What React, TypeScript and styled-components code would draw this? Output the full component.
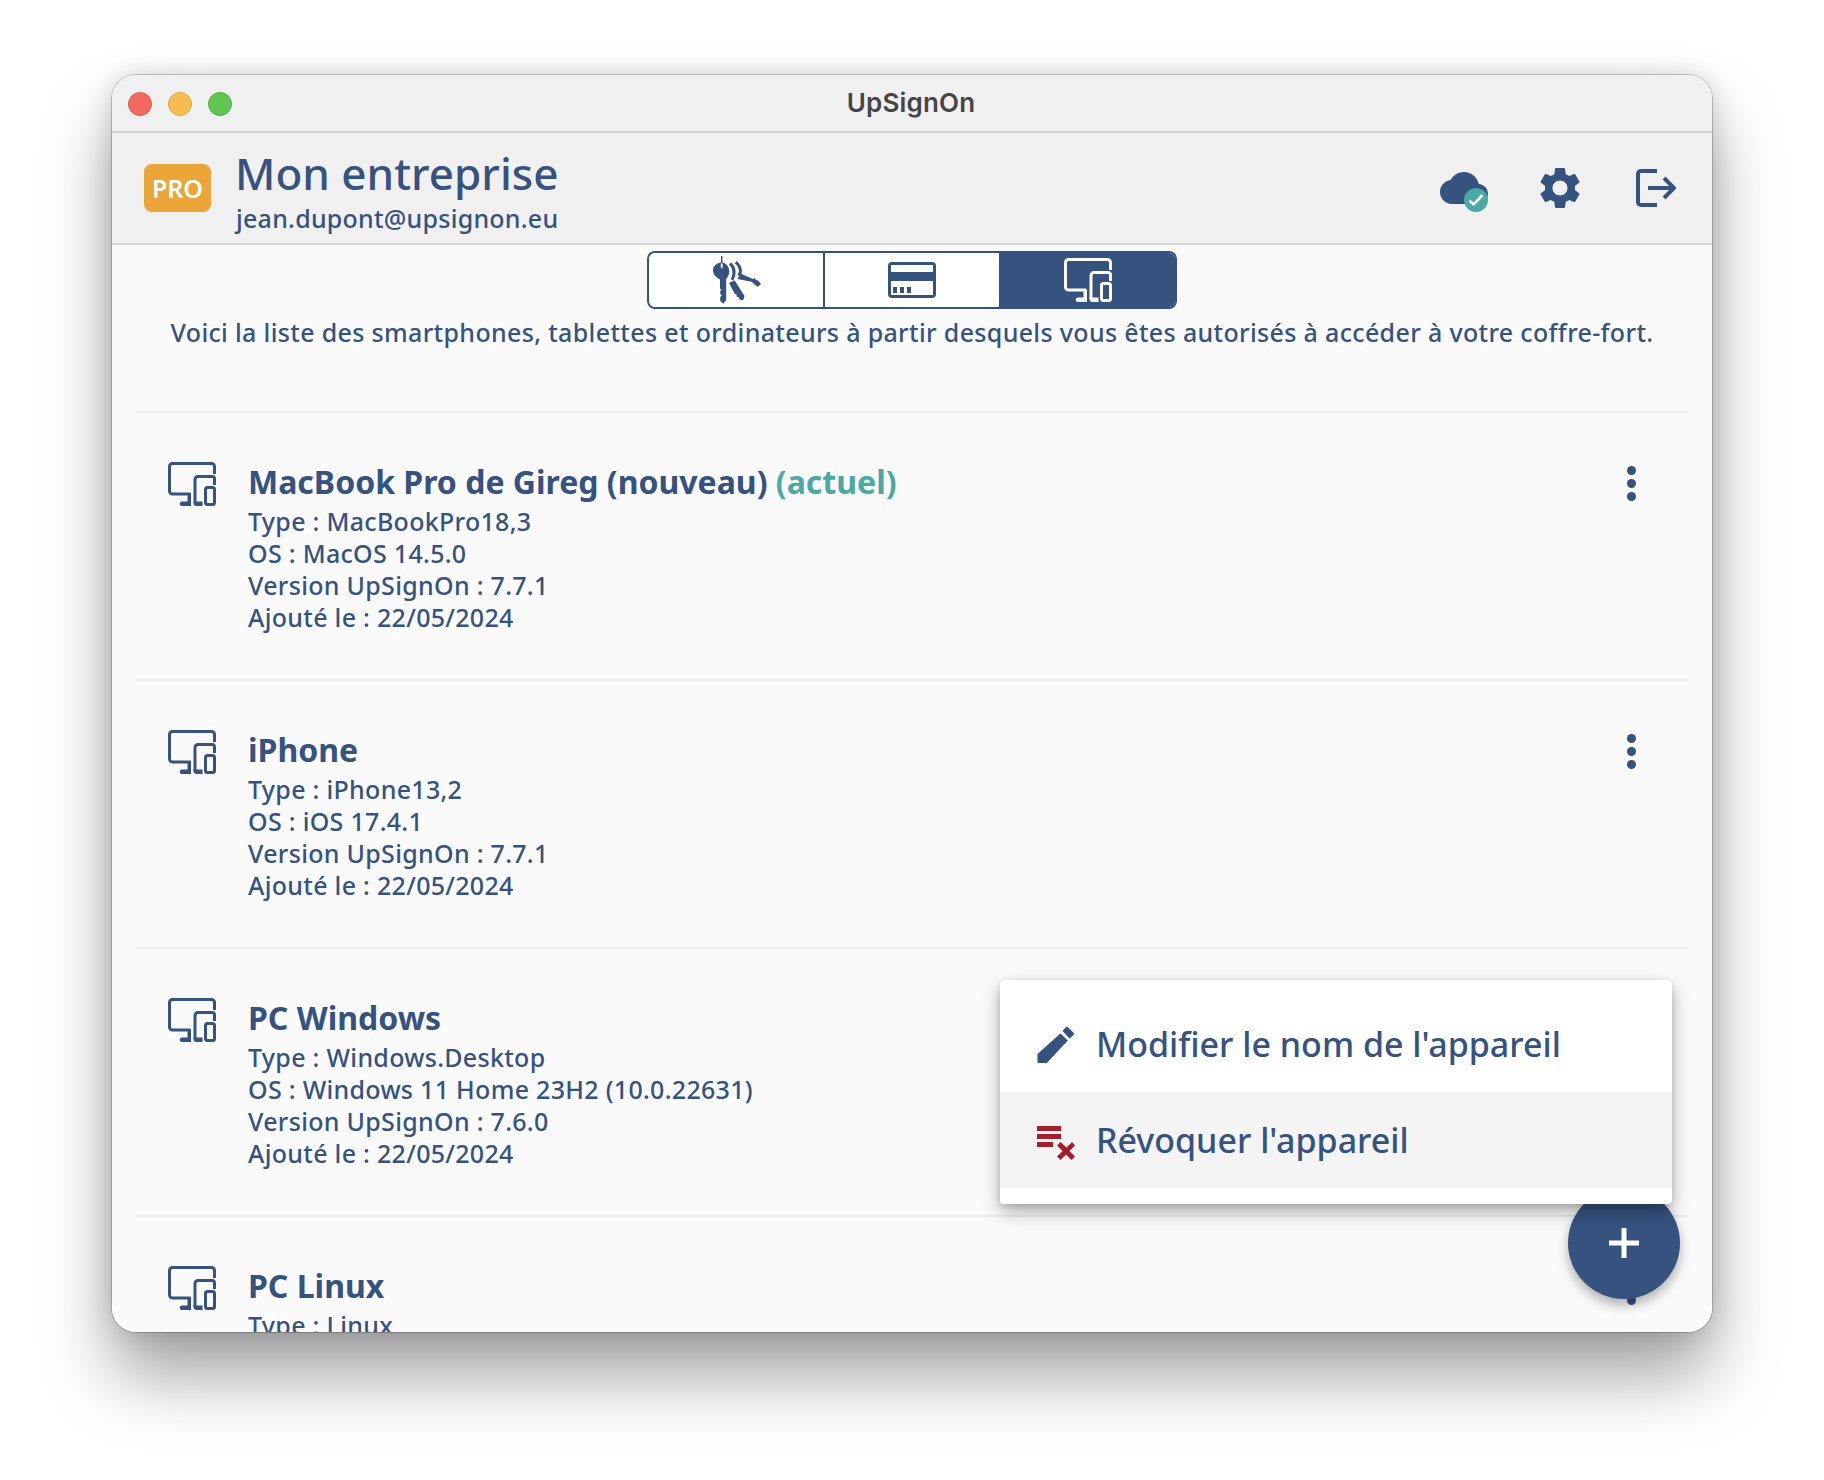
import styled, { createGlobalStyle } from "styled-components";

const BLUE = "#36527f";

const GlobalStyle = createGlobalStyle`
  html, body {
    margin: 0;
    padding: 0;
    background: #fff;
  }
  * {
    box-sizing: border-box;
  }
`;

const Page = styled.div`
  width: 1824px;
  height: 1480px;
  padding: 75px 112px 148px;
  overflow: hidden;
  font-family: "Noto Sans", "Open Sans", sans-serif;
  color: ${BLUE};
`;

const Window = styled.div`
  position: relative;
  width: 1600px;
  height: 1257px;
  border-radius: 24px;
  overflow: hidden;
  display: flex;
  flex-direction: column;
  background: #fafafa;
`;

const WindowShadow = styled.div`
  width: 1600px;
  height: 1257px;
  border-radius: 24px;
  box-shadow: 0 0 0 1px rgba(0, 0, 0, 0.2), 0 44px 68px rgba(0, 0, 0, 0.36),
    0 0 26px rgba(0, 0, 0, 0.16);
`;

const TitleBar = styled.div`
  position: relative;
  height: 58px;
  flex: none;
  display: flex;
  align-items: center;
  justify-content: center;
  background: #f0f0f0;
  border-bottom: 2px solid #d2d2d2;
`;

const Lights = styled.div`
  position: absolute;
  left: 16px;
  top: 17px;
  display: flex;
  gap: 16px;
`;

const Light = styled.span<{ $color: string; $edge: string }>`
  width: 24px;
  height: 24px;
  border-radius: 50%;
  background: ${(p) => p.$color};
  border: 1px solid ${(p) => p.$edge};
`;

const WindowTitle = styled.div`
  font-family: "Inter", "Liberation Sans", sans-serif;
  font-weight: 600;
  font-size: 26px;
  letter-spacing: 0.2px;
  color: #454545;
  margin: -2px 0 0 -2px;
`;

const Header = styled.div`
  height: 112px;
  flex: none;
  display: flex;
  align-items: center;
  padding: 0 32px;
  background: #f0f0f0;
  border-bottom: 2px solid #d2d2d2;
`;

const ProBadge = styled.div`
  width: 67px;
  height: 48px;
  border-radius: 8px;
  background: #eba538;
  color: #fff;
  font-size: 25px;
  font-weight: 600;
  display: flex;
  align-items: center;
  justify-content: center;
  margin-right: 24px;
`;

const Identity = styled.div`
  flex: 1;
  display: flex;
  flex-direction: column;
  margin-top: 4px;
`;

const CompanyName = styled.div`
  font-size: 44px;
  font-weight: 500;
  line-height: 54px;
`;

const Email = styled.div`
  font-size: 25px;
  font-weight: 500;
  line-height: 32px;
  letter-spacing: 0.25px;
  margin: 2px 0 0 1px;
`;

const HeaderActions = styled.div`
  display: flex;
  align-items: center;
  margin-right: 4px;
`;

const CloudWrap = styled.div`
  position: relative;
  width: 48px;
  height: 48px;
  margin-right: 47px;
`;

const CheckBadge = styled.span`
  position: absolute;
  left: 24px;
  top: 24px;
  width: 24px;
  height: 24px;
  border-radius: 50%;
  background: #4aa8a5;
  display: flex;
  align-items: center;
  justify-content: center;
`;

const GearIcon = styled.svg`
  margin-right: 51px;
`;

const Tabs = styled.div`
  align-self: center;
  margin-top: 6px;
  width: 530px;
  height: 58px;
  flex: none;
  display: flex;
  border: 2px solid ${BLUE};
  border-radius: 8px;
  overflow: hidden;
  background: #fff;
`;

const Tab = styled.div<{ $active?: boolean }>`
  flex: 1;
  display: flex;
  align-items: center;
  justify-content: center;
  background: ${(p) => (p.$active ? BLUE : "#fff")};
  color: ${(p) => (p.$active ? "#fff" : BLUE)};
  & + & {
    border-left: 2px solid ${BLUE};
  }
`;

const Description = styled.p`
  margin: 7px 0 0;
  flex: none;
  height: 95px;
  text-align: center;
  font-size: 25px;
  font-weight: 500;
  line-height: 32px;
  letter-spacing: 0.34px;
`;

const List = styled.div`
  flex: 1;
  min-height: 0;
  padding: 0 24px;
  overflow: hidden;
`;

const Row = styled.div`
  height: 268px;
  display: flex;
  padding: 46px 0 0 32px;
  border-top: 2px solid #ececec;
`;

const DeviceIcon = styled.svg`
  flex: none;
  margin: 3px 32px 0 0;
  color: ${BLUE};
`;

const RowBody = styled.div`
  flex: 1;
`;

const DeviceName = styled.div`
  font-size: 32px;
  font-weight: 700;
  line-height: 46px;
`;

const Current = styled.span`
  color: #4aa8a5;
`;

const Detail = styled.div`
  font-size: 25px;
  font-weight: 500;
  line-height: 32px;
  letter-spacing: 0.3px;
`;

const Kebab = styled.div`
  flex: none;
  display: flex;
  flex-direction: column;
  gap: 4px;
  margin: 7px 52px 0 0;
`;

const Dot = styled.span`
  width: 9px;
  height: 9px;
  border-radius: 50%;
  background: ${BLUE};
`;

const Fab = styled.div`
  position: absolute;
  left: 1456px;
  top: 1112px;
  width: 112px;
  height: 112px;
  border-radius: 50%;
  background: ${BLUE};
  box-shadow: 0 6px 12px rgba(0, 0, 0, 0.3);
  display: flex;
  align-items: center;
  justify-content: center;
`;

const Menu = styled.div`
  position: absolute;
  left: 888px;
  top: 905px;
  width: 672px;
  height: 224px;
  padding: 16px 0;
  background: #fff;
  border-radius: 4px;
  box-shadow: 0 8px 18px rgba(0, 0, 0, 0.3), 0 2px 6px rgba(0, 0, 0, 0.12);
`;

const MenuItem = styled.div<{ $hover?: boolean }>`
  height: 96px;
  display: flex;
  align-items: center;
  padding-left: 37px;
  gap: 21px;
  font-size: 34px;
  font-weight: 500;
  background: ${(p) => (p.$hover ? "#f4f4f4" : "#fff")};
`;

const MenuIcon = styled.svg<{ $offset?: number }>`
  flex: none;
  margin-top: ${(p) => p.$offset ?? 0}px;
`;

const devices = [
  {
    name: "MacBook Pro de Gireg (nouveau)",
    current: true,
    type: "MacBookPro18,3",
    os: "MacOS 14.5.0",
    version: "7.7.1",
    added: "22/05/2024",
  },
  {
    name: "iPhone",
    type: "iPhone13,2",
    os: "iOS 17.4.1",
    version: "7.7.1",
    added: "22/05/2024",
  },
  {
    name: "PC Windows",
    type: "Windows.Desktop",
    os: "Windows 11 Home 23H2 (10.0.22631)",
    version: "7.6.0",
    added: "22/05/2024",
  },
  {
    name: "PC Linux",
    type: "Linux",
    os: "Ubuntu 22.04",
    version: "7.6.0",
    added: "22/05/2024",
  },
];

const DevicesGlyph = () => (
  <>
    <path
      d="M22 32H4.500a3 3 0 0 1-3-3V4.500a3 3 0 0 1 3-3h39a3 3 0 0 1 3 3V12"
      fill="none"
      stroke="currentColor"
      strokeWidth="3"
    />
    <path d="M19.500 31h3.500v13h-9a2.300 2.300 0 0 1-2.300-2.300 2.300 2.300 0 0 1 2.300-2.200h5.500z" fill="currentColor" />
    <path
      d="M46.500 23V17a2.500 2.500 0 0 0-2.500-2.500H30a3 3 0 0 0-3 3V41"
      fill="none"
      stroke="currentColor"
      strokeWidth="3"
    />
    <path d="M25.500 39.500h9V44h-6a3 3 0 0 1-3-3z" fill="currentColor" />
    <rect x="37.500" y="25.500" width="9" height="17" rx="2" fill="none" stroke="currentColor" strokeWidth="3" />
  </>
);

const KeysIcon = () => (
  <svg width="50" height="50" viewBox="0 0 50 50" fill="currentColor">
    <path
      fillRule="evenodd"
      d="M10 1h1.400v6.500c4 .8 6.800 4.400 6.800 8.800 0 3.500-1.500 6.200-3 7.700V45l-3 3.700-3-2.700v-4l1.700-1.500-1.700-1.500v-3l1.300-1.200L9 33.500V24.500C6 22.800 2 20 2 15.500c0-4.200 3.500-7.500 8-8zM9.800 8.500v4.700h1.800V8.500z"
    />
    <path d="M20 7.500c4.200 3 6.800 10 2.200 18l-2.500-1.200c3.200-6.200 1.700-11.800-1.800-14.800z" />
    <path d="M25.500 6c4.200 3 7.800 10 3.500 15.500l-2.500-1.700c3-3.800 .8-8.700-2.600-11.300z" />
    <path d="M18 28l5.500-2.800 10 15.700-1.300 4.300-3.600-.8-1.100-2.500-1.800-.2-.2-2.300-1.600-.4z" />
    <path d="M26.500 24l3-5.500 12.500 5.500 1.800-1 1.200 2 2.100.4 2.900 3.800-3.500 2.500-3.300-2.500-2.500-2.500z" />
  </svg>
);

const CardIcon = () => (
  <svg width="48" height="36" viewBox="0 0 48 36">
    <path
      fill="currentColor"
      fillRule="evenodd"
      d="M4 0h40a4 4 0 0 1 4 4v28a4 4 0 0 1-4 4H4a4 4 0 0 1-4-4V4a4 4 0 0 1 4-4zM3 3v7h42V3zm0 16v14h42V19zm2 6h4v6H5zm7 0h4v6h-4zm7 0h4v6h-4z"
    />
  </svg>
);

const App = () => {
  return (
    <Page>
      <GlobalStyle />
      <WindowShadow>
        <Window>
          <TitleBar>
            <Lights>
              <Light $color="#f1695f" $edge="#dd5c52" />
              <Light $color="#f5bd4f" $edge="#dca63e" />
              <Light $color="#61c554" $edge="#53ae46" />
            </Lights>
            <WindowTitle>UpSignOn</WindowTitle>
          </TitleBar>
          <Header>
            <ProBadge>PRO</ProBadge>
            <Identity>
              <CompanyName>Mon entreprise</CompanyName>
              <Email>jean.dupont@upsignon.eu</Email>
            </Identity>
            <HeaderActions>
              <CloudWrap>
                <svg width="48" height="48" viewBox="0 0 24 24" fill={BLUE}>
                  <path d="M19.350 10.040C18.670 6.590 15.640 4 12 4 9.110 4 6.600 5.640 5.350 8.040 2.340 8.360 0 10.910 0 14c0 3.310 2.690 6 6 6h13c2.760 0 5-2.240 5-5 0-2.640-2.050-4.780-4.650-4.960z" />
                </svg>
                <CheckBadge>
                  <svg width="16" height="14" viewBox="0 0 16 14" fill="none" stroke="#fff" strokeWidth="2.600">
                    <path d="M1.500 7.500l4.200 4L14.500 2" />
                  </svg>
                </CheckBadge>
              </CloudWrap>
              <GearIcon width="50" height="50" viewBox="0 0 24 24" fill={BLUE}>
                <path d="M19.140 12.940c.04-.3.06-.61.06-.94 0-.32-.02-.64-.07-.94l2.030-1.580c.18-.14.23-.41.12-.61l-1.920-3.320c-.12-.22-.37-.29-.59-.22l-2.390.96c-.5-.38-1.030-.7-1.620-.94l-.36-2.540c-.04-.24-.24-.41-.48-.41h-3.840c-.24 0-.43.17-.47.41l-.36 2.540c-.59.24-1.130.57-1.620.94l-2.390-.96c-.22-.08-.47 0-.59.22L2.740 8.870c-.12.21-.08.47.12.61l2.030 1.580c-.05.3-.09.63-.09.94s.02.64.07.94l-2.030 1.580c-.18.14-.23.41-.12.61l1.920 3.320c.12.22.37.29.59.22l2.390-.96c.5.38 1.030.7 1.620.94l.36 2.540c.05.24.24.41.48.41h3.840c.24 0 .44-.17.47-.41l.36-2.540c.59-.24 1.130-.56 1.620-.94l2.390.96c.22.08.47 0 .59-.22l1.920-3.320c.12-.22.07-.47-.12-.61l-2.010-1.580zM12 15.600c-1.980 0-3.600-1.620-3.600-3.600s1.620-3.600 3.600-3.600 3.600 1.620 3.600 3.600-1.620 3.600-3.600 3.600z" />
              </GearIcon>
              <svg width="40" height="38" viewBox="0 0 40 38" fill="none" stroke={BLUE} strokeWidth="4">
                <path d="M21 2H5a3 3 0 0 0-3 3v28a3 3 0 0 0 3 3h16" />
                <path d="M12 19h25M28 9l10 10-10 10" />
              </svg>
            </HeaderActions>
          </Header>
          <Tabs>
            <Tab>
              <KeysIcon />
            </Tab>
            <Tab>
              <CardIcon />
            </Tab>
            <Tab $active>
              <svg width="48" height="46" viewBox="0 0 48 44">
                <DevicesGlyph />
              </svg>
            </Tab>
          </Tabs>
          <Description>
            Voici la liste des smartphones, tablettes et ordinateurs à partir desquels vous êtes autorisés à accéder à
            votre coffre-fort.
          </Description>
          <List>
            {devices.map((device) => (
              <Row key={device.name}>
                <DeviceIcon width="48" height="44" viewBox="0 0 48 44">
                  <DevicesGlyph />
                </DeviceIcon>
                <RowBody>
                  <DeviceName>
                    {device.name} {device.current && <Current>(actuel)</Current>}
                  </DeviceName>
                  <Detail>Type : {device.type}</Detail>
                  <Detail>OS : {device.os}</Detail>
                  <Detail>Version UpSignOn : {device.version}</Detail>
                  <Detail>Ajouté le : {device.added}</Detail>
                </RowBody>
                <Kebab>
                  <Dot />
                  <Dot />
                  <Dot />
                </Kebab>
              </Row>
            ))}
          </List>
          <Fab>
            <svg width="30" height="30" viewBox="0 0 30 30" fill="#fff">
              <path d="M12.500 0h5v12.500H30v5H17.500V30h-5V17.500H0v-5h12.500z" />
            </svg>
          </Fab>
          <Menu>
            <MenuItem>
              <MenuIcon width="38" height="37" viewBox="0 0 37 37" fill={BLUE}>
                <path d="M0 37v-9L23 7.500l7.300 7L9.300 37zM25 5l3-3.500a2 2 0 0 1 2.800 0l5 5a2 2 0 0 1 0 2.800L32 12.500z" />
              </MenuIcon>
              Modifier le nom de l'appareil
            </MenuItem>
            <MenuItem $hover>
              <MenuIcon $offset={6} width="38" height="34" viewBox="0 0 38 34" fill="#a31f2b">
                <path d="M0 0h24v5H0zM0 8h24v5H0zM0 16h16v5H0z" />
                <path d="M20 19.500l3.500-3.500 6 5.500 5.500-5.500 3 3.500-5.500 5.500 5.500 5.500-3.500 3.500-5.500-5.500-5.500 5.500-3.500-3.500 5.500-5.500z" />
              </MenuIcon>
              Révoquer l'appareil
            </MenuItem>
          </Menu>
        </Window>
      </WindowShadow>
    </Page>
  );
};

export default App;
